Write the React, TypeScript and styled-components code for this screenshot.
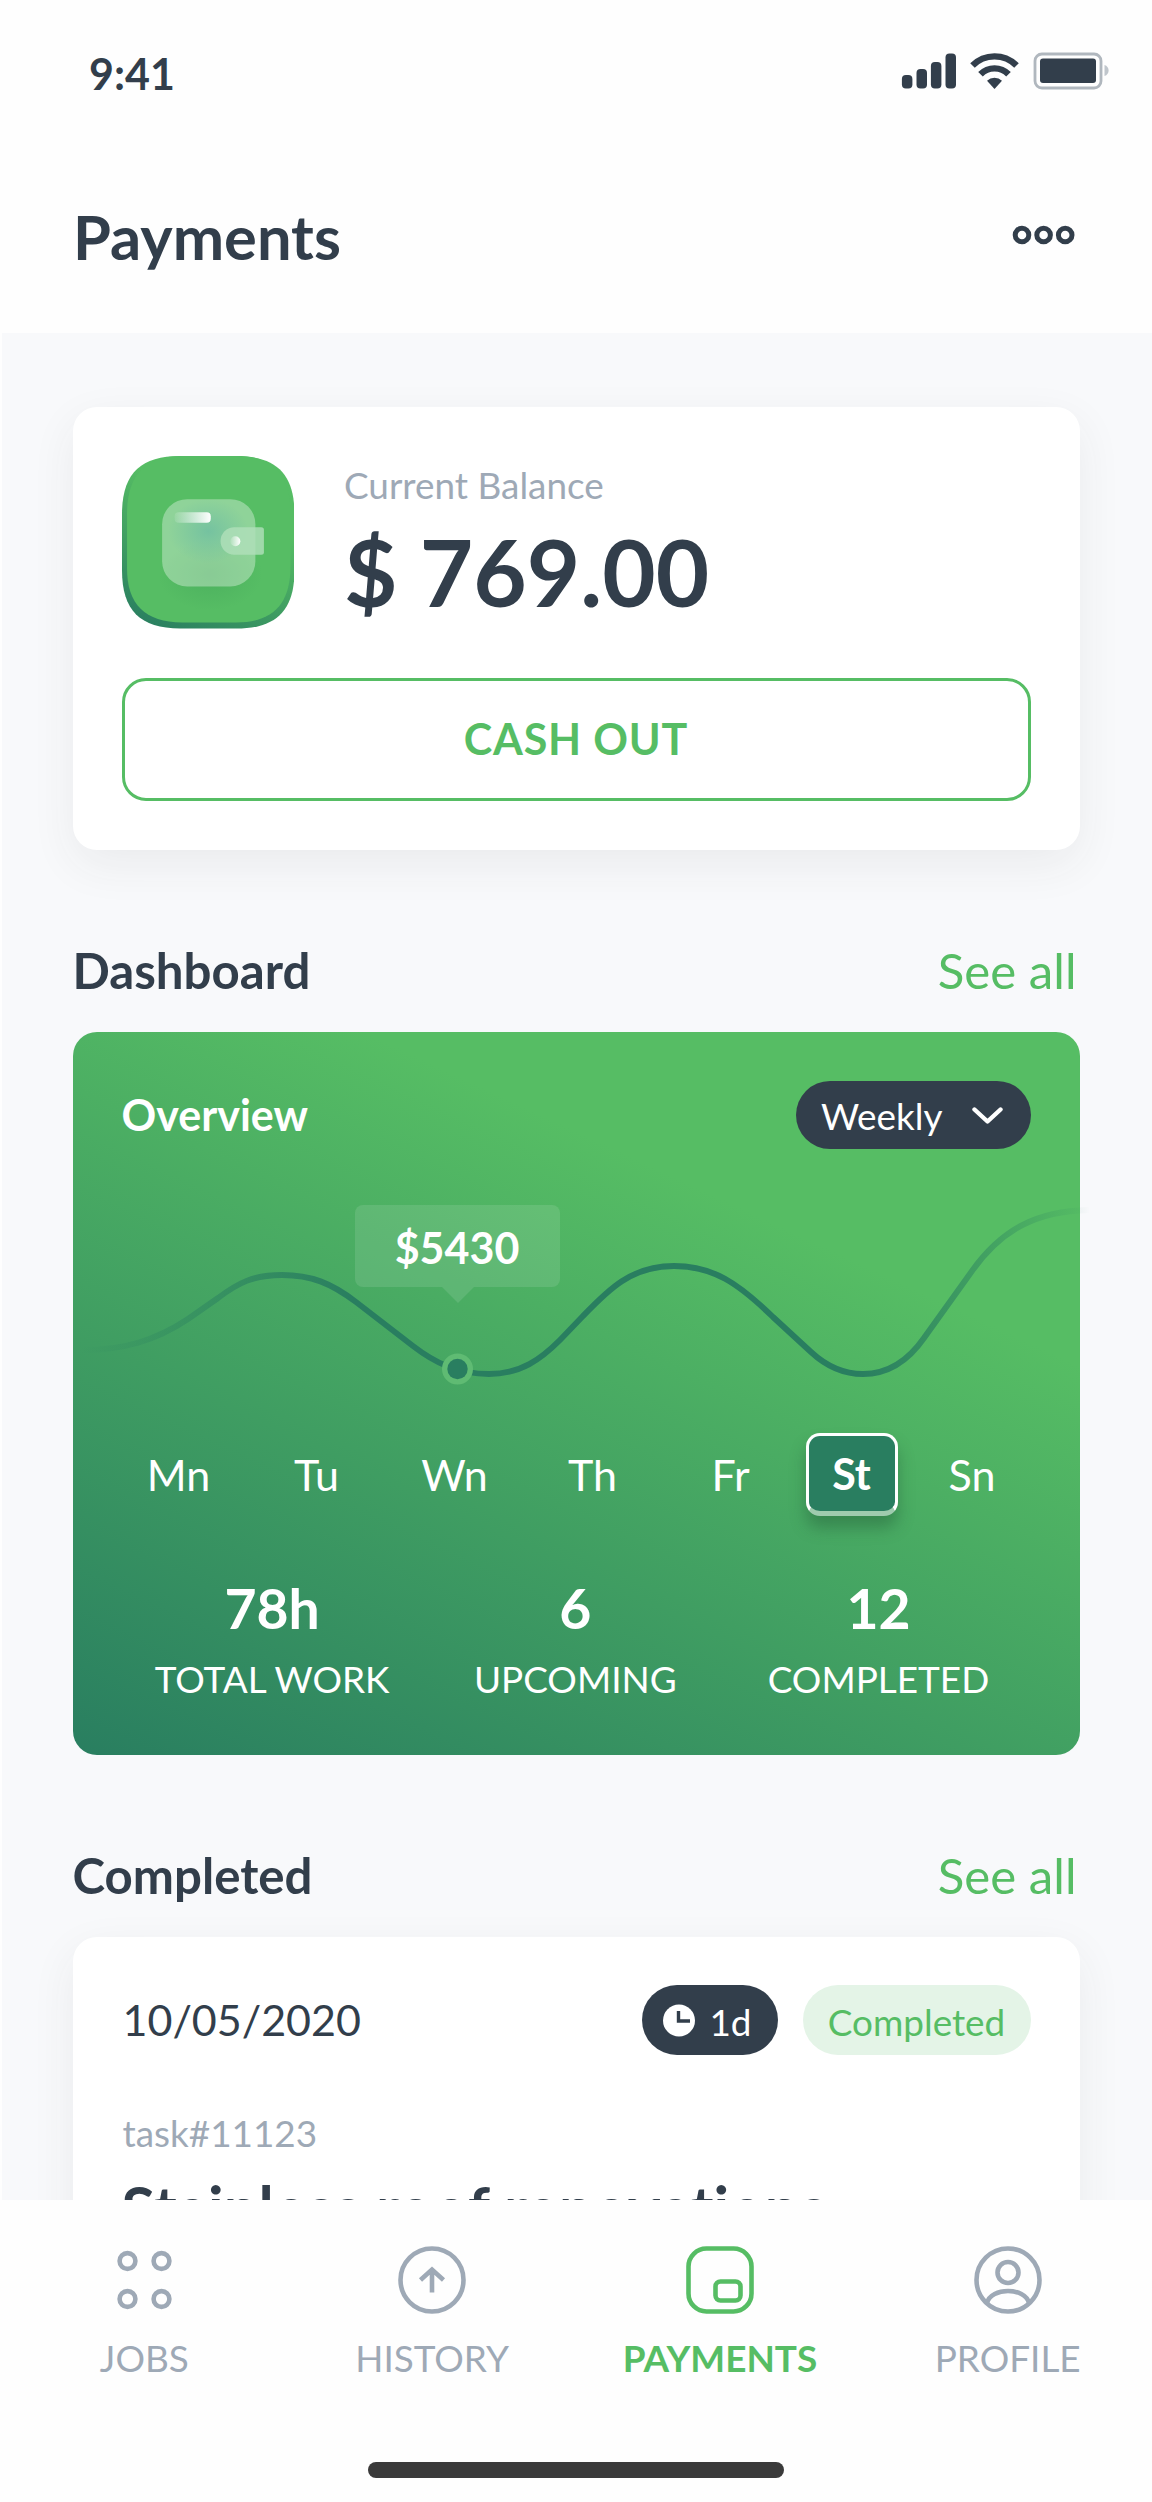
import React from "react";
import styled, { createGlobalStyle, css } from "styled-components";

const ink = "#323e4b";
const green = "#56bd64";
const pine = "#297e60";
const mist = "#9ea9b6";

const GlobalStyle = createGlobalStyle`
  *, *::before, *::after { box-sizing: border-box; }
  body {
    margin: 0;
    background: #fefefe;
    font-family: Lato, "Open Sans", sans-serif;
    font-variant-ligatures: none;
    color: ${ink};
  }
`;

const Screen = styled.div`
  width: 1152px;
  height: 2502px;
  display: flex;
  flex-direction: column;
  overflow: hidden;
  background: #fefefe;
`;

const StatusBar = styled.div`
  height: 136px;
  padding: 6px 39.7px 0 89px;
  display: flex;
  align-items: center;
  justify-content: space-between;
`;

const Clock = styled.span`
  padding-top: 5px;
  font-size: 43px;
  font-weight: 700;
  line-height: 52px;
`;

const Header = styled.header`
  height: 197px;
  padding: 0 76.5px 0 73px;
  display: flex;
  align-items: center;
  justify-content: space-between;
`;

const Title = styled.h1`
  margin: 0;
  padding-top: 2px;
  font-size: 61.4px;
  font-weight: 700;
  line-height: 74px;
`;

const Main = styled.main`
  height: 1867px;
  margin-left: 2px;
  padding: 74px 72.5px 0 70.5px;
  background: #f8f9fb;
  overflow: hidden;
`;

const Card = styled.section`
  background: #fff;
  border-radius: 24px;
  box-shadow: 0 15px 46px rgba(50, 55, 60, 0.07);
`;

const BalanceCard = styled(Card)`
  height: 443px;
  padding: 49px;
  display: flex;
  flex-direction: column;
  justify-content: space-between;
`;

const BalanceRow = styled.div`
  display: flex;
  gap: 50px;
`;

const BalanceText = styled.div`
  padding-top: 7px;
`;

const Muted = styled.div`
  color: ${mist};
  font-size: 36.9px;
  line-height: 44px;
`;

const Amount = styled.div`
  margin-top: 10px;
  font-size: 92.2px;
  font-weight: 700;
  line-height: 110px;
`;

const CashOut = styled.button`
  height: 123px;
  padding: 0 0 2px;
  border: 3px solid ${green};
  border-radius: 24px;
  background: transparent;
  color: ${green};
  font: 700 43px/52px Lato, sans-serif;
  letter-spacing: 0.8px;
`;

const SectionHead = styled.div`
  display: flex;
  justify-content: space-between;
  align-items: center;
  height: 60px;
  margin: 90px 3px 31.5px 0;
  line-height: 60px;
  font-size: 49.2px;
`;

const SectionTitle = styled.h2`
  margin: 0;
  font-size: inherit;
  font-weight: 700;
`;

const SeeAll = styled.a`
  color: ${green};
`;

const Dashboard = styled.section`
  height: 723.5px;
  padding: 49px 49px 0;
  border-radius: 24px;
  color: #fff;
  background: linear-gradient(25deg, ${pine} 0%, ${green} 72%);
`;

const DashboardHead = styled.div`
  height: 68px;
  display: flex;
  align-items: center;
  justify-content: space-between;
`;

const CardTitle = styled.h3`
  margin: 0;
  font-size: 43px;
  font-weight: 700;
  line-height: 52px;
`;

const Pill = styled.span<{ $tone: "dark" | "soft" }>`
  display: inline-flex;
  align-items: center;
  justify-content: space-between;
  border-radius: 35px;
  font-size: 36.9px;
  line-height: 44px;
  ${({ $tone }) =>
    $tone === "dark"
      ? css`background: ${ink}; color: #fff;`
      : css`background: #e4f4e7; color: ${green};`}
`;

const PeriodPill = styled(Pill)`
  width: 234.5px;
  height: 68px;
  padding: 3px 28px 0 25px;
`;

const Chart = styled.div`
  position: relative;
  height: 284px;
  margin: 0 -49px;
`;

const ChartSvg = styled.svg`
  display: block;
  width: 1009px;
  height: 284px;
  overflow: visible;
`;

const Tooltip = styled.div`
  position: absolute;
  left: 282px;
  top: 56px;
  width: 205px;
  height: 82px;
  border-radius: 8px;
  background: rgba(255, 255, 255, 0.11);
  font-size: 43px;
  font-weight: 700;
  line-height: 85px;
  text-align: center;
  &::after {
    content: "";
    position: absolute;
    left: 87px;
    top: 100%;
    border: 16px solid transparent;
    border-bottom-width: 0;
    border-top-color: rgba(255, 255, 255, 0.11);
  }
`;

const Days = styled.div`
  display: grid;
  grid-template-columns: 138px 138px 138px 138px 138px 104px 137px;
  margin: 0 -12px;
  height: 83px;
  align-items: center;
  justify-items: center;
  font-size: 43px;
  line-height: 52px;
`;

const Day = styled.span<{ $active?: boolean }>`
  padding-top: 2px;
  ${({ $active }) =>
    $active &&
    css`
      width: 92px;
      height: 83px;
      padding-top: 1px;
      border: 3px solid #fff;
      border-bottom: 5px solid #9fcbae;
      border-radius: 14px;
      background: ${pine};
      font-weight: 700;
      line-height: 73px;
      text-align: center;
      box-shadow: 0 12px 16px rgba(30, 80, 50, 0.38);
    `}
`;

const Stats = styled.div`
  display: grid;
  grid-template-columns: repeat(3, 303.2px);
  margin: 59px 0 0 -1px;
  text-align: center;
`;

const StatValue = styled.div`
  font-size: 55.3px;
  font-weight: 700;
  line-height: 66px;
`;

const StatLabel = styled.div`
  margin-top: 16px;
  font-size: 36.9px;
  line-height: 44px;
`;

const JobCard = styled(Card)`
  height: 500px;
  padding: 48.5px 49px 0;
`;

const JobHead = styled.div`
  height: 70px;
  display: flex;
  align-items: center;
  gap: 25px;
`;

const JobDate = styled.span`
  flex: 1;
  font-size: 43px;
  line-height: 52px;
  padding-left: 1px;
`;

const TimePill = styled(Pill)`
  width: 136px;
  height: 70px;
  padding: 0 26px 0 21px;
`;

const StatePill = styled(Pill)`
  width: 228px;
  height: 70px;
  justify-content: center;
`;

const PillText = styled.span`
  padding-top: 3px;
`;

const JobTag = styled(Muted)`
  margin-top: 55.5px;
  padding-left: 1px;
`;

const JobTitle = styled.h3`
  margin: 19px 0 0;
  font-size: 61.4px;
  font-weight: 700;
  line-height: 66px;
  letter-spacing: 0.1px;
  white-space: nowrap;
`;

const TabBar = styled.nav`
  height: 302px;
  padding-top: 46px;
  background: #fefefe;
  display: flex;
  flex-direction: column;
  justify-content: space-between;
  align-items: center;
`;

const Tabs = styled.div`
  display: grid;
  grid-template-columns: repeat(4, 287.8px);
`;

const Tab = styled.div<{ $active?: boolean }>`
  display: flex;
  flex-direction: column;
  align-items: center;
  gap: 22px;
  color: ${({ $active }) => ($active ? green : mist)};
  font-size: 36.9px;
  font-weight: ${({ $active }) => ($active ? 700 : 400)};
  line-height: 44px;
`;

const TabIcon = styled.svg`
  width: 68px;
  height: 68px;
  fill: none;
  stroke: currentColor;
  stroke-width: 4.6;
`;

const HomeIndicator = styled.div`
  width: 416px;
  height: 15.5px;
  margin-bottom: 24.5px;
  border-radius: 8px;
  background: #3a3a3a;
`;

const StatusIcons = () => (
  <svg width="211" height="38" viewBox="0 0 211 38" fill={ink}>
    <rect x="0.900" y="23" width="10.500" height="13.500" rx="4" />
    <rect x="15.500" y="17" width="10.500" height="19.500" rx="4" />
    <rect x="29.900" y="10" width="10.500" height="26.500" rx="4" />
    <rect x="44.500" y="1.500" width="10.500" height="35" rx="4" />
    <g fill="none" stroke={ink} strokeWidth="6.4">
      <path d="M71.500 13.500 A31 31 0 0 1 115.500 13.500" />
      <path d="M79.500 22.300 A19.500 19.500 0 0 1 107.500 22.300" />
    </g>
    <path d="M93.500 37 L86 28.800 A11 11 0 0 1 101 28.800 Z" />
    <rect x="134" y="2" width="66" height="34" rx="7" fill="none" stroke="#b0b7be" strokeWidth="2.800" />
    <rect x="139" y="6.500" width="56" height="24.500" rx="3" />
    <path d="M203.500 13 C209 14.500 209 22.500 203.500 24 Z" fill="#c0c6cc" />
  </svg>
);

const MoreIcon = () => (
  <svg width="64" height="20" viewBox="0 0 64 20" fill="none" stroke={ink} strokeWidth="5">
    <circle cx="10" cy="10" r="6.8" />
    <circle cx="31.600" cy="10" r="6.8" />
    <circle cx="53.200" cy="10" r="6.8" />
  </svg>
);

const WalletIcon = () => (
  <svg width="172.5" height="172.5" viewBox="0 0 172 172">
    <defs>
      <linearGradient id="rim" x1="0.15" y1="1" x2="0.5" y2="0.25">
        <stop offset="0" stopColor={pine} />
        <stop offset="1" stopColor={green} />
      </linearGradient>
      <radialGradient id="glow">
        <stop offset="0" stopColor="#67b9a4" stopOpacity="0.65" />
        <stop offset="1" stopColor="#67b9a4" stopOpacity="0" />
      </radialGradient>
      <radialGradient id="shade">
        <stop offset="0" stopColor="#45a85a" stopOpacity="0.6" />
        <stop offset="1" stopColor="#45a85a" stopOpacity="0" />
      </radialGradient>
      <linearGradient id="shine" x1="0" x2="1">
        <stop offset="0" stopColor="#fff" stopOpacity="0.1" />
        <stop offset="1" stopColor="#fff" />
      </linearGradient>
    </defs>
    <path
      d="M0 58 C0 18 18 0 58 0 H114 C154 0 172 18 172 58 V114 C172 154 154 172 114 172 H58 C18 172 0 154 0 114 Z"
      fill="url(#rim)"
    />
    <path
      d="M5 58 C5 20 22 0 60 0 H114 C150 0 168 18 168 56 V110 C168 148 150 166 114 166 H60 C23 166 5 148 5 112 Z"
      fill={green}
    />
    <ellipse cx="88" cy="118" rx="52" ry="36" fill="url(#shade)" />
    <rect x="40" y="43" width="93" height="87" rx="25" fill="#fff" fillOpacity="0.34" />
    <ellipse cx="86" cy="75" rx="40" ry="32" fill="url(#glow)" />
    <path d="M112 71 H139 Q141.500 71 141.500 73.500 V96 Q141.500 98.500 139 98.500 H112 A13.750 13.750 0 0 1 112 71 Z" fill="#b0dfba" fillOpacity="0.82" />
    <rect x="52.500" y="56" width="36" height="10.500" rx="4" fill="url(#shine)" />
    <circle cx="113" cy="85" r="5" fill="url(#shine)" />
  </svg>
);

const CurveChart = () => (
  <ChartSvg viewBox="0 0 1009 284" fill="none">
    <defs>
      <linearGradient id="curve" gradientUnits="userSpaceOnUse" x1="8" y1="0" x2="1017" y2="0">
        <stop offset="0" stopColor={pine} stopOpacity="0" />
        <stop offset="0.27" stopColor={pine} />
        <stop offset="0.77" stopColor={pine} />
        <stop offset="1" stopColor={pine} stopOpacity="0" />
      </linearGradient>
    </defs>
    <path
      d="M0 201 C50 203 85 190 115 170 L145 149 C165 134 180 126 209 126 C238 126 258 134 283 153 L340 197 C362 214 385 225 416 225 C448 225 468 210 487 191 L510 167 C535 141 558 117 601 117 C640 117 665 134 700 168 L738 203 C752 216 769 225 790 225 C815 225 835 212 851 189 L899 122 C929 80 964 62 1016 61"
      stroke="url(#curve)"
      strokeWidth="5.900"
    />
    <circle cx="384.500" cy="220" r="15.500" fill="#5fbb73" />
    <circle cx="384.500" cy="220" r="10.200" fill={pine} />
  </ChartSvg>
);

const Chevron = () => (
  <svg width="31" height="18" viewBox="0 0 31 18" fill="none" stroke="#fff" strokeWidth="4.400" strokeLinecap="round" strokeLinejoin="round">
    <path d="M2.500 2.500 L15.500 14.500 L28.500 2.500" />
  </svg>
);

const ClockIcon = () => (
  <svg width="32" height="33" viewBox="0 0 32 33">
    <circle cx="16" cy="16.500" r="16" fill="#fff" />
    <path d="M15.500 7 V17 H27" fill="none" stroke={ink} strokeWidth="3.400" />
  </svg>
);

const days = ["Mn", "Tu", "Wn", "Th", "Fr", "St", "Sn"];
const stats = [
  ["78h", "TOTAL WORK"],
  ["6", "UPCOMING"],
  ["12", "COMPLETED"],
];

export default function App() {
  return (
    <Screen>
      <GlobalStyle />
      <StatusBar>
        <Clock>9:41</Clock>
        <StatusIcons />
      </StatusBar>
      <Header>
        <Title>Payments</Title>
        <MoreIcon />
      </Header>
      <Main>
        <BalanceCard>
          <BalanceRow>
            <WalletIcon />
            <BalanceText>
              <Muted>Current Balance</Muted>
              <Amount>$ 769.00</Amount>
            </BalanceText>
          </BalanceRow>
          <CashOut>CASH OUT</CashOut>
        </BalanceCard>

        <SectionHead>
          <SectionTitle>Dashboard</SectionTitle>
          <SeeAll>See all</SeeAll>
        </SectionHead>
        <Dashboard>
          <DashboardHead>
            <CardTitle>Overview</CardTitle>
            <PeriodPill $tone="dark">
              Weekly
              <Chevron />
            </PeriodPill>
          </DashboardHead>
          <Chart>
            <CurveChart />
            <Tooltip>$5430</Tooltip>
          </Chart>
          <Days>
            {days.map((d) => (
              <Day key={d} $active={d === "St"}>{d}</Day>
            ))}
          </Days>
          <Stats>
            {stats.map(([value, label]) => (
              <div key={label}>
                <StatValue>{value}</StatValue>
                <StatLabel>{label}</StatLabel>
              </div>
            ))}
          </Stats>
        </Dashboard>

        <SectionHead>
          <SectionTitle>Completed</SectionTitle>
          <SeeAll>See all</SeeAll>
        </SectionHead>
        <JobCard>
          <JobHead>
            <JobDate>10/05/2020</JobDate>
            <TimePill $tone="dark">
              <ClockIcon />
              <PillText>1d</PillText>
            </TimePill>
            <StatePill $tone="soft">
              <PillText>Completed</PillText>
            </StatePill>
          </JobHead>
          <JobTag>task#11123</JobTag>
          <JobTitle>Stainless roof renovations</JobTitle>
        </JobCard>
      </Main>
      <TabBar>
        <Tabs>
          <Tab>
            <TabIcon viewBox="0 0 68 68">
              <circle cx="17.500" cy="15" r="7.900" />
              <circle cx="51.500" cy="15" r="7.900" />
              <circle cx="17.500" cy="53" r="7.900" />
              <circle cx="51.500" cy="53" r="7.900" />
            </TabIcon>
            JOBS
          </Tab>
          <Tab>
            <TabIcon viewBox="0 0 68 68">
              <circle cx="34" cy="34" r="31.500" />
              <path d="M34 46.500 V24 M22.500 34 L34 23.500 L45.500 34" />
            </TabIcon>
            HISTORY
          </Tab>
          <Tab $active>
            <TabIcon viewBox="0 0 68 68">
              <rect x="2.500" y="2.500" width="63" height="63" rx="18" />
              <rect x="29.500" y="35.500" width="25" height="19" rx="5" />
            </TabIcon>
            PAYMENTS
          </Tab>
          <Tab>
            <TabIcon viewBox="0 0 68 68">
              <circle cx="34" cy="34" r="31.500" />
              <circle cx="34" cy="26.500" r="10.500" />
              <path d="M13 57 C17 41 51 41 55 57" />
            </TabIcon>
            PROFILE
          </Tab>
        </Tabs>
        <HomeIndicator />
      </TabBar>
    </Screen>
  );
}
